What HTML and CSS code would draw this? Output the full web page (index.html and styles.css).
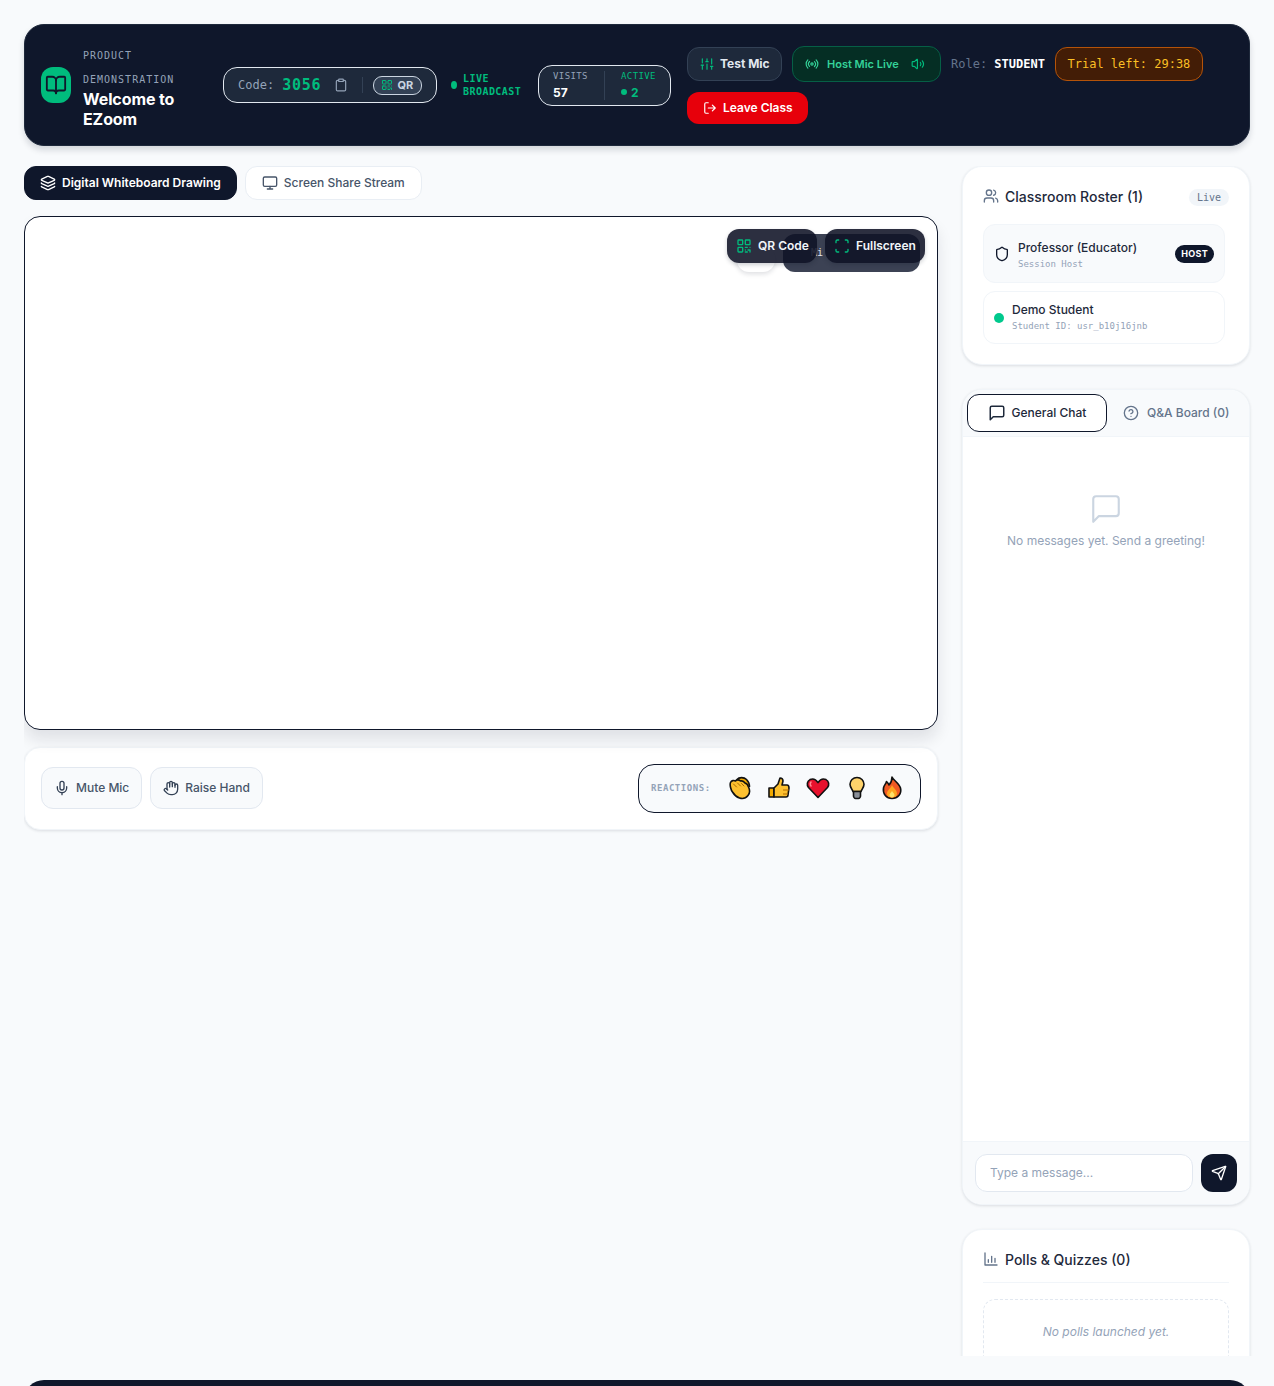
FILE: index.html
```html
<!DOCTYPE html>
<html lang="en">
  <head>
    <meta charset="UTF-8" />
    <meta name="viewport" content="width=device-width, initial-scale=1.0" />
    <title>Welcome to EZoom</title>
    <link rel="stylesheet" href="styles.css">
  </head>
  <body>
    <svg class="sprite" xmlns="http://www.w3.org/2000/svg">
      <symbol id="i-book" viewBox="0 0 24 24"><path d="M12 7v14"/><path d="M3 18a1 1 0 0 1-1-1V4a1 1 0 0 1 1-1h5a4 4 0 0 1 4 4 4 4 0 0 1 4-4h5a1 1 0 0 1 1 1v13a1 1 0 0 1-1 1h-6a3 3 0 0 0-3 3 3 3 0 0 0-3-3z"/></symbol>
      <symbol id="i-clipboard" viewBox="0 0 24 24"><rect x="8" y="2" width="8" height="4" rx="1"/><path d="M16 4h2a2 2 0 0 1 2 2v14a2 2 0 0 1-2 2H6a2 2 0 0 1-2-2V6a2 2 0 0 1 2-2h2"/></symbol>
      <symbol id="i-qr" viewBox="0 0 24 24"><rect x="3" y="3" width="7" height="7" rx="1"/><rect x="14" y="3" width="7" height="7" rx="1"/><rect x="3" y="14" width="7" height="7" rx="1"/><path d="M14 14h3M21 14v.01M14 18h.01M18 18h3v3M14 21h3"/></symbol>
      <symbol id="i-sliders" viewBox="0 0 24 24"><path d="M4 21v-7M4 10V3M12 21v-9M12 8V3M20 21v-5M20 12V3M2 14h4M10 8h4M18 16h4"/></symbol>
      <symbol id="i-radio" viewBox="0 0 24 24"><path d="M4.9 19.1C1 15.2 1 8.8 4.9 4.9"/><path d="M7.8 16.2c-2.3-2.3-2.3-6.1 0-8.5"/><circle cx="12" cy="12" r="2"/><path d="M16.2 7.8c2.3 2.3 2.3 6.1 0 8.5"/><path d="M19.1 4.9C23 8.8 23 15.1 19.1 19"/></symbol>
      <symbol id="i-volume" viewBox="0 0 24 24"><path d="M11 4.702a.705.705 0 0 0-1.203-.498L6.413 7.587A1.4 1.4 0 0 1 5.416 8H3a1 1 0 0 0-1 1v6a1 1 0 0 0 1 1h2.416a1.4 1.4 0 0 1 .997.413l3.383 3.384A.705.705 0 0 0 11 19.298z"/><path d="M16 9a5 5 0 0 1 0 6"/><path d="M19.4 6.5a9 9 0 0 1 0 11"/></symbol>
      <symbol id="i-logout" viewBox="0 0 24 24"><path d="M16 17l5-5-5-5M21 12H9M9 21H5a2 2 0 0 1-2-2V5a2 2 0 0 1 2-2h4"/></symbol>
      <symbol id="i-layers" viewBox="0 0 24 24"><path d="M12.83 2.18a2 2 0 0 0-1.66 0L2.6 6.08a1 1 0 0 0 0 1.83l8.58 3.91a2 2 0 0 0 1.66 0l8.58-3.9a1 1 0 0 0 0-1.83z"/><path d="M2 12a1 1 0 0 0 .58.91l8.6 3.91a2 2 0 0 0 1.65 0l8.58-3.9A1 1 0 0 0 22 12"/><path d="M2 17a1 1 0 0 0 .58.91l8.6 3.91a2 2 0 0 0 1.65 0l8.58-3.9A1 1 0 0 0 22 17"/></symbol>
      <symbol id="i-monitor" viewBox="0 0 24 24"><rect x="2" y="3" width="20" height="14" rx="2"/><path d="M8 21h8M12 17v4"/></symbol>
      <symbol id="i-scan" viewBox="0 0 24 24"><path d="M3 7V5a2 2 0 0 1 2-2h2M17 3h2a2 2 0 0 1 2 2v2M21 17v2a2 2 0 0 1-2 2h-2M7 21H5a2 2 0 0 1-2-2v-2"/></symbol>
      <symbol id="i-mic" viewBox="0 0 24 24"><path d="M12 2a3 3 0 0 0-3 3v7a3 3 0 0 0 6 0V5a3 3 0 0 0-3-3Z"/><path d="M19 10v2a7 7 0 0 1-14 0v-2"/><path d="M12 19v3"/></symbol>
      <symbol id="i-hand" viewBox="0 0 24 24"><path d="M18 11V6a2 2 0 0 0-2-2a2 2 0 0 0-2 2"/><path d="M14 10V4a2 2 0 0 0-2-2a2 2 0 0 0-2 2v2"/><path d="M10 10.5V6a2 2 0 0 0-2-2a2 2 0 0 0-2 2v8"/><path d="M18 8a2 2 0 1 1 4 0v6a8 8 0 0 1-8 8h-2c-2.8 0-4.5-.86-5.99-2.34l-3.6-3.6a2 2 0 0 1 2.83-2.82L7 15"/></symbol>
      <symbol id="i-users" viewBox="0 0 24 24"><path d="M16 21v-2a4 4 0 0 0-4-4H6a4 4 0 0 0-4 4v2"/><circle cx="9" cy="7" r="4"/><path d="M22 21v-2a4 4 0 0 0-3-3.87"/><path d="M16 3.13a4 4 0 0 1 0 7.75"/></symbol>
      <symbol id="i-shield" viewBox="0 0 24 24"><path d="M20 13c0 5-3.5 7.5-7.66 8.95a1 1 0 0 1-.67-.01C7.5 20.5 4 18 4 13V6a1 1 0 0 1 1-1c2 0 4.5-1.2 6.24-2.72a1.17 1.17 0 0 1 1.52 0C14.51 3.81 17 5 19 5a1 1 0 0 1 1 1z"/></symbol>
      <symbol id="i-message" viewBox="0 0 24 24"><path d="M21 15a2 2 0 0 1-2 2H7l-4 4V5a2 2 0 0 1 2-2h14a2 2 0 0 1 2 2z"/></symbol>
      <symbol id="i-help" viewBox="0 0 24 24"><circle cx="12" cy="12" r="10"/><path d="M9.09 9a3 3 0 0 1 5.83 1c0 2-3 3-3 3"/><path d="M12 17h.01"/></symbol>
      <symbol id="i-send" viewBox="0 0 24 24"><path d="M14.536 21.686a.5.5 0 0 0 .937-.024l6.5-19a.496.496 0 0 0-.635-.635l-19 6.5a.5.5 0 0 0-.024.937l7.93 3.18a2 2 0 0 1 1.112 1.11z"/><path d="m21.854 2.147-10.94 10.939"/></symbol>
      <symbol id="i-chart" viewBox="0 0 24 24"><path d="M3 3v18h18"/><path d="M8 17v-4M13 17V8M18 17v-6"/></symbol>
    </svg>

    <header class="topbar">
      <div class="brand">
        <div class="brand-icon"><svg class="icon ic-22"><use href="#i-book"/></svg></div>
        <div class="brand-text">
          <div class="brand-label">PRODUCT DEMONSTRATION</div>
          <h1>Welcome to EZoom</h1>
        </div>
      </div>

      <div class="session">
        <div class="code-pill">
          <span class="code-label">Code:</span>
          <span class="code-value">3056</span>
          <svg class="icon ic-14 code-copy"><use href="#i-clipboard"/></svg>
          <span class="code-sep"></span>
          <span class="qr-pill"><svg class="icon ic-12 green"><use href="#i-qr"/></svg>QR</span>
        </div>
        <div class="live">
          <span class="live-dot"></span>
          <span>LIVE BROADCAST</span>
        </div>
        <div class="stats">
          <div class="stat">
            <span class="stat-label">VISITS</span>
            <b>57</b>
          </div>
          <div class="stat stat-active">
            <span class="stat-label">ACTIVE</span>
            <b><i></i>2</b>
          </div>
        </div>
      </div>

      <div class="top-actions">
        <button class="btn-test"><svg class="icon ic-14 green"><use href="#i-sliders"/></svg>Test Mic</button>
        <div class="host-live">
          <svg class="icon ic-14"><use href="#i-radio"/></svg>
          <span>Host Mic Live</span>
          <svg class="icon ic-14 vol"><use href="#i-volume"/></svg>
        </div>
        <div class="role">Role: <b>STUDENT</b></div>
        <div class="trial">Trial left: 29:38</div>
        <button class="btn-leave"><svg class="icon ic-14"><use href="#i-logout"/></svg>Leave Class</button>
      </div>
    </header>

    <main class="layout">
      <section class="stage">
        <div class="view-tabs">
          <button class="view-tab active"><svg class="icon ic-16"><use href="#i-layers"/></svg>Digital Whiteboard Drawing</button>
          <button class="view-tab"><svg class="icon ic-16"><use href="#i-monitor"/></svg>Screen Share Stream</button>
        </div>

        <div class="board">
          <!-- toolbar that sits behind the floating buttons -->
          <span class="under-white"></span>
          <span class="under-dark">Mi</span>
          <button class="float-btn float-qr"><svg class="icon ic-16 green"><use href="#i-qr"/></svg>QR Code</button>
          <button class="float-btn float-full"><svg class="icon ic-16 green"><use href="#i-scan"/></svg>Fullscreen</button>
        </div>

        <div class="controls">
          <div class="control-btns">
            <button class="ctl-btn"><svg class="icon ic-16"><use href="#i-mic"/></svg>Mute Mic</button>
            <button class="ctl-btn"><svg class="icon ic-16"><use href="#i-hand"/></svg>Raise Hand</button>
          </div>
          <div class="reactions">
            <span class="reactions-label">REACTIONS:</span>
            <svg class="emoji" viewBox="0 0 24 24">
              <path d="M9 3.500c2-2.500 7-2.500 9.500 0 2 2 3 4.500 3 7" fill="#f2a900" stroke="#111" stroke-width="1.600" stroke-linecap="round"/>
              <path d="M2.500 6.500c1-2 3.500-2.500 5-1.500 1-1.500 3.500-1.500 5 0 2-.5 3.500.5 4.500 2 2 .5 3 2 3.500 4 1.500 3 1.500 6-.5 8.500s-5.500 3.500-8.500 2.500c-3-1-5.500-3.500-7-6C3 14 1.500 9 2.500 6.500z" fill="#fdc02f" stroke="#111" stroke-width="1.600" stroke-linejoin="round"/>
              <path d="M5.500 8l3 3M9.500 7l3 3M13.500 7.500l2.500 2.500" fill="none" stroke="#a86a00" stroke-width="1" stroke-linecap="round"/>
            </svg>
            <svg class="emoji" viewBox="0 0 24 24">
              <path d="M2 12h5v9H2z" fill="#f2a900" stroke="#111" stroke-width="1.600" stroke-linejoin="round"/>
              <path d="M7 12l4-4 2-6c2 0 3 1 3 3l-1 4h5c2 0 2 2 2 3l-1 7c0 1-1 2-2 2H7z" fill="#fdc02f" stroke="#111" stroke-width="1.600" stroke-linejoin="round"/>
              <path d="M16 14h6M16 18h5" fill="none" stroke="#b36a00" stroke-width="1.100"/>
            </svg>
            <svg class="emoji" viewBox="0 0 24 24">
              <path d="M12 21.500L2.500 11.500C.5 9 1 5 4 3.600c3-1.300 6 0 8 3 2-3 5-4.300 8-3 3 1.400 3.500 5.400 1.500 7.900z" fill="#e8112d" stroke="#111" stroke-width="1.600" stroke-linejoin="round"/>
              <path d="M5 6c-1 1-1 3 0 4" fill="none" stroke="#ff8a96" stroke-width="1.600" stroke-linecap="round"/>
            </svg>
            <svg class="emoji" viewBox="0 0 24 24">
              <path d="M12 1.500c-4 0-7 3-7 6.800 0 3 2.200 4.700 3 7.200h8c.8-2.500 3-4.200 3-7.200 0-3.800-3-6.800-7-6.800z" fill="#ffd36b" stroke="#111" stroke-width="1.600" stroke-linejoin="round"/>
              <path d="M8.500 15.500h7v4.500c0 1-1 2.500-2 2.500h-3c-1 0-2-1.500-2-2.500z" fill="#8a8f98" stroke="#111" stroke-width="1.600" stroke-linejoin="round"/>
            </svg>
            <svg class="emoji emoji-fire" viewBox="0 0 24 24">
              <path d="M12 1c1 3 7 6 8.500 11 1.500 6-3 10.500-8.500 10.500S2.500 18 3.500 12c.5-3 2.500-4 3-6.500 1 1 2 2 2.500 3.500C10 8 12 5 12 1z" fill="#f15a24" stroke="#111" stroke-width="1.600" stroke-linejoin="round"/>
              <path d="M12 9c1 3 5 5 5 8.500 0 3-2.500 4-5 4s-5-1-5-4c0-3.500 4-5 5-8.500z" fill="#ffa51f"/>
              <path d="M12 15c.6 1.500 2.500 2.500 2.500 4s-1.200 2.500-2.500 2.500-2.500-1-2.500-2.500 1.900-2.500 2.500-4z" fill="#ffe36b"/>
            </svg>
          </div>
        </div>
      </section>

      <aside class="sidebar">
        <section class="card roster">
          <div class="card-head">
            <h2><svg class="icon ic-16 muted"><use href="#i-users"/></svg>Classroom Roster (1)</h2>
            <span class="live-badge">Live</span>
          </div>
          <div class="roster-list">
            <div class="person person-host">
              <svg class="icon ic-16"><use href="#i-shield"/></svg>
              <div class="person-info">
                <div class="person-name">Professor (Educator)</div>
                <div class="person-sub">Session Host</div>
              </div>
              <span class="host-badge">HOST</span>
            </div>
            <div class="person person-student">
              <span class="online-dot"></span>
              <div class="person-info">
                <div class="person-name">Demo Student</div>
                <div class="person-sub">Student ID: usr_b10j16jnb</div>
              </div>
            </div>
          </div>
        </section>

        <section class="card chat">
          <div class="chat-tabs">
            <button class="chat-tab active"><svg class="icon ic-18"><use href="#i-message"/></svg>General Chat</button>
            <button class="chat-tab"><svg class="icon ic-16"><use href="#i-help"/></svg>Q&amp;A Board (0)</button>
          </div>
          <div class="chat-body">
            <svg class="icon chat-empty-icon"><use href="#i-message"/></svg>
            <p>No messages yet. Send a greeting!</p>
          </div>
          <form class="chat-form">
            <input type="text" placeholder="Type a message..." />
            <button type="button" class="send-btn"><svg class="icon ic-16"><use href="#i-send"/></svg></button>
          </form>
        </section>

        <section class="card polls">
          <h2 class="polls-head"><svg class="icon ic-16 muted"><use href="#i-chart"/></svg>Polls &amp; Quizzes (0)</h2>
          <div class="polls-empty">No polls launched yet.</div>
        </section>
      </aside>
    </main>

    <footer class="bottom"></footer>
  </body>
</html>
```

FILE: styles.css
```css
* {
  box-sizing: border-box;
}
html,
body {
  height: 1386px;
  overflow: hidden;
}
body {
  margin: 0;
  padding: 24px 24px 0;
  background: #f8fafc;
  font-family: Inter, "Noto Sans", sans-serif;
  color: #0f172b;
}
button {
  font-family: inherit;
  cursor: pointer;
  white-space: nowrap;
}
.sprite {
  position: absolute;
  width: 0;
  height: 0;
}
.icon {
  fill: none;
  stroke: currentColor;
  stroke-width: 2;
  stroke-linecap: round;
  stroke-linejoin: round;
  flex: none;
}
.ic-12 {
  width: 12px;
  height: 12px;
}
.ic-14 {
  width: 14px;
  height: 14px;
}
.ic-16 {
  width: 16px;
  height: 16px;
}
.ic-18 {
  width: 18px;
  height: 18px;
}
.ic-22 {
  width: 22px;
  height: 22px;
}
.green {
  color: #00bc7d;
}
.muted {
  color: #64748b;
}

/* top bar */
.topbar {
  display: flex;
  align-items: center;
  gap: 16px;
  height: 122px;
  padding: 17px 16px;
  background: #0f172b;
  border: 1px solid #1e293b;
  border-radius: 20px;
  box-shadow: 0 4px 6px rgba(15, 23, 42, 0.15);
  color: #fff;
}
.brand {
  display: flex;
  align-items: center;
  gap: 12px;
  width: 166px;
  flex: none;
}
.brand-icon {
  width: 30px;
  height: 36px;
  flex: none;
  display: flex;
  align-items: center;
  justify-content: center;
  background: #00bc7d;
  border-radius: 12px;
  color: #0f172b;
}
.brand-text {
  width: 124px;
  padding-top: 3px;
}
.brand-label {
  font-family: "DejaVu Sans Mono", monospace;
  font-size: 10px;
  line-height: 24px;
  letter-spacing: 1px;
  color: #94a3b8;
  width: 110px;
}
h1 {
  margin: -3px 0 0;
  font-size: 16px;
  line-height: 20px;
  font-weight: 700;
  letter-spacing: -0.1px;
  width: 110px;
}
.session {
  display: flex;
  align-items: center;
  gap: 14px;
  flex: none;
}
.code-pill {
  display: flex;
  align-items: center;
  width: 214px;
  height: 36px;
  padding: 0 14px;
  background: #1e293b;
  border: 1px solid #e2e8f0;
  border-radius: 14px;
  font-family: "DejaVu Sans Mono", monospace;
}
.code-label {
  font-size: 12px;
  color: #94a3b8;
  margin-right: 8px;
}
.code-value {
  font-size: 15px;
  font-weight: 700;
  letter-spacing: 0.8px;
  color: #00bc7d;
}
.code-copy {
  margin-left: 13px;
  color: #94a3b8;
}
.code-sep {
  width: 1px;
  height: 16px;
  background: #334155;
  margin: 0 10px 0 14px;
}
.qr-pill {
  display: flex;
  align-items: center;
  gap: 4px;
  width: 49px;
  height: 19px;
  padding: 0 7px;
  border: 1px solid #cbd5e1;
  border-radius: 9px;
  background: #334155;
  font-family: Inter, sans-serif;
  font-size: 11px;
  font-weight: 700;
  color: #cbd5e1;
}
.live {
  display: flex;
  align-items: center;
  gap: 6px;
  width: 73px;
  font-family: "DejaVu Sans Mono", monospace;
  font-size: 10px;
  line-height: 13px;
  font-weight: 700;
  letter-spacing: 0.45px;
  color: #00bc7d;
}
.live-dot {
  width: 6px;
  height: 8px;
  flex: none;
  border-radius: 50%;
  background: #00bc7d;
}
.stats {
  display: flex;
  align-items: center;
  width: 133px;
  height: 41px;
  padding: 0 14px;
  background: #1e293b;
  border: 1px solid #e2e8f0;
  border-radius: 14px;
}
.stat {
  display: flex;
  flex-direction: column;
  gap: 3px;
  width: 52px;
  font-size: 12px;
  color: #fff;
}
.stat b {
  display: flex;
  align-items: center;
  gap: 4px;
  line-height: 15px;
}
.stat-label {
  font-family: "DejaVu Sans Mono", monospace;
  font-size: 9px;
  line-height: 11px;
  letter-spacing: 0.4px;
  color: #94a3b8;
}
.stat-active {
  border-left: 1px solid #334155;
  padding-left: 16px;
  width: 52px;
  flex: none;
  white-space: nowrap;
  color: #00bc7d;
}
.stat-active .stat-label {
  color: #00bc7d;
}
.stat-active i {
  width: 6px;
  height: 6px;
  border-radius: 50%;
  background: #00bc7d;
}
.top-actions {
  display: flex;
  flex-wrap: wrap;
  align-items: center;
  gap: 10px;
  width: 547px;
  flex: none;
}
.btn-test,
.btn-leave {
  display: flex;
  align-items: center;
  border-radius: 12px;
  font-size: 12px;
  font-weight: 600;
}
.btn-test {
  gap: 6px;
  width: 95px;
  height: 34px;
  padding: 0 12px 1px;
  background: #1e293b;
  border: 1px solid #334155;
  font-weight: 700;
  color: #e2e8f0;
}
.host-live {
  display: flex;
  align-items: center;
  gap: 8px;
  width: 149px;
  height: 36px;
  padding: 0 12px;
  background: #052e24;
  border: 1px solid #065f46;
  border-radius: 12px;
  font-size: 11px;
  font-weight: 600;
  color: #34d399;
}
.host-live .vol {
  margin-left: 4px;
  color: #00bc7d;
}
.role {
  font-family: "DejaVu Sans Mono", monospace;
  font-size: 12px;
  color: #64748b;
}
.role b {
  color: #fff;
}
.trial {
  display: flex;
  align-items: center;
  justify-content: center;
  width: 148px;
  height: 34px;
  background: #431d06;
  border: 1px solid #b45309;
  border-radius: 12px;
  font-family: "DejaVu Sans Mono", monospace;
  font-size: 12px;
  color: #fbbf24;
}
.btn-leave {
  gap: 6px;
  width: 121px;
  height: 32px;
  padding: 0 16px 1px;
  background: #e7000b;
  border: none;
  color: #fff;
}

/* main columns */
.layout {
  display: grid;
  grid-template-columns: 914px 288px;
  gap: 24px;
  height: 1190px;
  margin-top: 20px;
  overflow: hidden;
  padding: 0 4px 0 0;
  margin-right: -4px;
}
.stage {
  display: flex;
  flex-direction: column;
}
.view-tabs {
  display: flex;
  gap: 8px;
}
.view-tab {
  display: flex;
  align-items: center;
  gap: 6px;
  height: 34px;
  padding: 0 16px 1px;
  background: #fff;
  border: 1px solid #e9eef4;
  border-radius: 12px;
  font-size: 12px;
  font-weight: 500;
  color: #475569;
}
.view-tab .icon {
  margin-top: 1px;
}
.view-tab.active {
  padding: 0 15px 1px;
  background: #0f172b;
  border-color: #0f172b;
  font-weight: 600;
  color: #fff;
}
.board {
  position: relative;
  height: 514px;
  margin-top: 16px;
  background: #fff;
  border: 1px solid #0f172b;
  border-radius: 16px;
  box-shadow: 0 10px 15px rgba(15, 23, 42, 0.1);
}
.float-btn {
  position: absolute;
  top: 12px;
  display: flex;
  align-items: center;
  gap: 6px;
  height: 34px;
  padding: 0 9px 1px;
  background: rgba(15, 18, 38, 0.88);
  border: none;
  border-radius: 12px;
  box-shadow: 0 2px 4px rgba(15, 23, 42, 0.2);
  font-size: 12px;
  font-weight: 600;
  color: #f1f5f9;
}
.float-qr {
  right: 120px;
  width: 90px;
}
.float-full {
  right: 12px;
  width: 100px;
}
.under-white {
  position: absolute;
  top: 30px;
  right: 162px;
  width: 38px;
  height: 25px;
  background: #fff;
  border-radius: 12px;
  box-shadow: 0 2px 5px rgba(15, 23, 42, 0.14);
}
.under-dark {
  position: absolute;
  top: 17px;
  right: 17px;
  width: 137px;
  height: 38px;
  padding: 13px 0 0 28px;
  background: #3c4254;
  border-radius: 12px;
  font-family: "DejaVu Sans Mono", monospace;
  font-size: 10px;
  color: #e2e8f0;
}
.controls {
  display: flex;
  align-items: center;
  justify-content: space-between;
  height: 83px;
  margin-top: 17px;
  padding: 0 16px;
  background: #fff;
  border: 1px solid #f1f5f9;
  border-radius: 16px;
  box-shadow: 0 1px 3px rgba(15, 23, 42, 0.12);
}
.control-btns {
  display: flex;
  gap: 8px;
  margin-top: -2px;
}
.ctl-btn {
  display: flex;
  align-items: center;
  gap: 6px;
  height: 42px;
  padding: 0 12px;
  background: #f8fafc;
  border: 1px solid #e2e8f0;
  border-radius: 12px;
  font-size: 12px;
  font-weight: 500;
  color: #475569;
}
.ctl-btn .icon {
  color: #334155;
}
.reactions {
  display: flex;
  align-items: center;
  width: 283px;
  height: 49px;
  padding: 0 16px 2px 12px;
  background: #f8fafc;
  border: 1px solid #0f172b;
  border-radius: 16px;
}
.reactions-label {
  font-family: "DejaVu Sans Mono", monospace;
  font-size: 9px;
  font-weight: 700;
  letter-spacing: 0.55px;
  color: #94a3b8;
  margin-right: 17px;
}
.emoji {
  width: 24px;
  height: 24px;
  flex: none;
  margin-right: 15px;
}
.emoji-fire {
  margin: 0 0 0 -4px;
}

/* sidebar */
.sidebar {
  display: flex;
  flex-direction: column;
  gap: 24px;
}
.card {
  background: #fff;
  border: 1px solid #f1f5f9;
  border-radius: 20px;
  box-shadow: 0 1px 3px rgba(15, 23, 42, 0.12);
  flex: none;
}
.roster {
  height: 199px;
  padding: 20px;
}
.card-head {
  display: flex;
  align-items: center;
  justify-content: space-between;
  height: 20px;
}
.card-head h2 {
  margin-top: -2px;
}
h2 {
  display: flex;
  align-items: center;
  gap: 6px;
  margin: 0;
  font-size: 14px;
  font-weight: 500;
  color: #1e293b;
}
.live-badge {
  height: 17px;
  padding: 0 8px;
  background: #f1f5f9;
  border-radius: 9px;
  font-family: "DejaVu Sans Mono", monospace;
  font-size: 10px;
  line-height: 17px;
  color: #64748b;
}
.roster-list {
  display: flex;
  flex-direction: column;
  gap: 8px;
  width: 242px;
  margin-top: 17px;
}
.person {
  display: flex;
  align-items: center;
  border: 1px solid #f1f5f9;
  border-radius: 12px;
}
.person-host {
  gap: 8px;
  height: 59px;
  padding: 2px 10px 0;
  background: #f8fafc;
}
.person-student {
  gap: 8px;
  height: 53px;
  padding: 0 10px 2px;
  background: #fff;
}
.person-student .online-dot {
  margin-top: 2px;
}
.person-host .icon {
  margin-top: -2px;
}
.person-host .host-badge {
  margin-top: -2px;
}
.person-info {
  flex: 1;
}
.person-name {
  font-size: 12px;
  font-weight: 500;
  line-height: 18px;
  color: #1e293b;
}
.person-sub {
  font-family: "DejaVu Sans Mono", monospace;
  font-size: 9px;
  line-height: 14px;
  color: #94a3b8;
}
.host-badge {
  height: 18px;
  padding: 0 6px;
  background: #0f172b;
  border-radius: 9px;
  font-size: 9px;
  font-weight: 700;
  line-height: 18px;
  letter-spacing: 0.3px;
  color: #fff;
}
.online-dot {
  width: 10px;
  height: 10px;
  flex: none;
  border-radius: 50%;
  background: #00c98d;
}
.chat {
  display: flex;
  flex-direction: column;
  height: 816px;
  overflow: hidden;
}
.chat-tabs {
  display: flex;
  align-items: center;
  height: 47px;
  flex: none;
  padding: 0 4px;
  background: #f8fafc;
  border-bottom: 1px solid #f1f5f9;
}
.chat-tab {
  display: flex;
  align-items: center;
  justify-content: center;
  gap: 8px;
  height: 38px;
  padding: 0 15px 1px;
  background: none;
  border: 1px solid transparent;
  border-radius: 12px;
  font-size: 12px;
  font-weight: 500;
  color: #64748b;
  flex: none;
}
.chat-tab .icon {
  margin-top: 1px;
}
.chat-tab.active {
  width: 140px;
  gap: 6px;
  background: #fff;
  border-color: #0f172b;
  color: #1e293b;
}
.chat-body {
  flex: 1;
  display: flex;
  flex-direction: column;
  align-items: center;
  padding-top: 55px;
  text-align: center;
}
.chat-empty-icon {
  width: 34px;
  height: 34px;
  stroke-width: 1.5;
  color: #cbd5e1;
}
.chat-body p {
  margin: 6px 0 0;
  font-size: 12px;
  line-height: 18px;
  color: #94a3b8;
}
.chat-form {
  display: flex;
  gap: 8px;
  height: 63px;
  flex: none;
  padding: 12px;
  background: #f8fafc;
  border-top: 1px solid #f1f5f9;
}
.chat-form input {
  flex: 1;
  min-width: 0;
  height: 38px;
  padding: 0 14px 2px;
  background: #fff;
  border: 1px solid #e2e8f0;
  border-radius: 12px;
  font-family: inherit;
  font-size: 12px;
  outline: none;
}
.chat-form input::placeholder {
  color: #94a3b8;
}
.send-btn {
  display: flex;
  align-items: center;
  justify-content: center;
  width: 36px;
  height: 38px;
  flex: none;
  padding: 0;
  background: #0f172b;
  border: none;
  border-radius: 12px;
  color: #fff;
}
.polls {
  height: 300px;
  padding: 20px;
}
.polls-head {
  height: 33px;
  align-items: flex-start;
  padding-top: 1px;
  border-bottom: 1px solid #f1f5f9;
}
.polls-empty {
  height: 120px;
  margin-top: 16px;
  padding-top: 24px;
  border: 1px dashed #e2e8f0;
  border-radius: 12px;
  font-size: 12px;
  font-style: italic;
  text-align: center;
  color: #94a3b8;
}

.bottom {
  height: 60px;
  margin-top: 24px;
  background: #0f172b;
  border-radius: 20px;
}
```
